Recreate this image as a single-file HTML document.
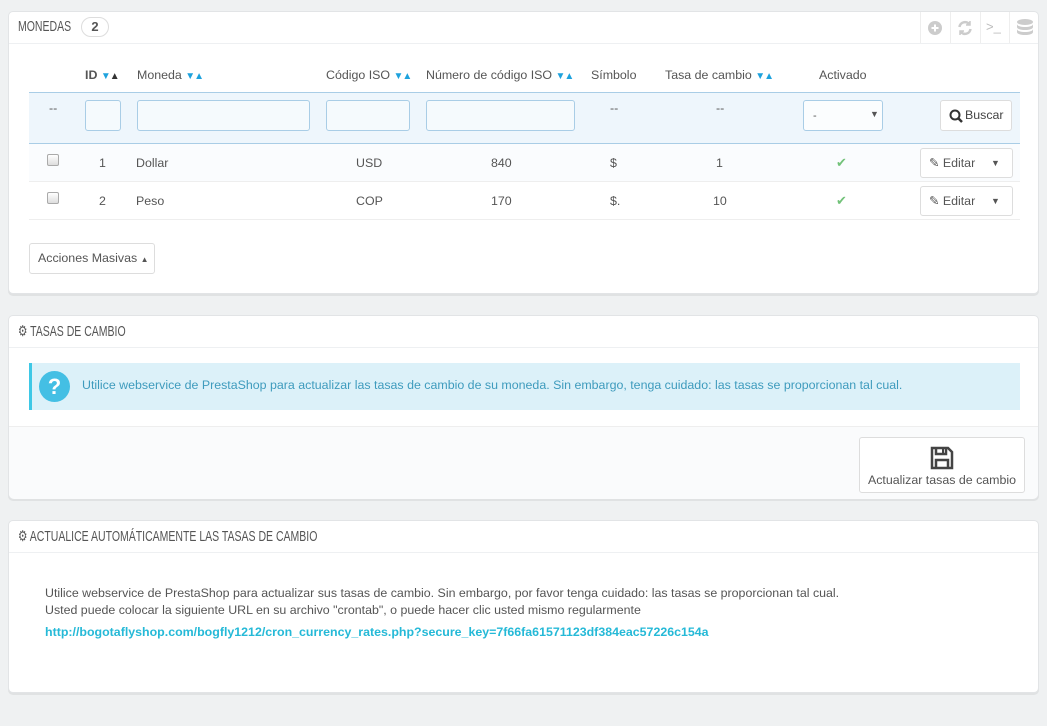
<!DOCTYPE html>
<html><head><meta charset="utf-8"><style>
*{box-sizing:border-box;margin:0;padding:0}
body{width:1047px;height:726px;background:#eff1f2;font-family:"Liberation Sans",sans-serif;font-size:12.4px;color:#555;position:relative;overflow:hidden}
.a{position:absolute}
.panel{position:absolute;left:8px;width:1031px;background:#fff;border:1px solid #e2e4e6;border-radius:5px;box-shadow:0 2px 0 rgba(0,0,0,.06)}
.ttl{position:absolute;left:9px;font-size:15px;color:#555;transform:scaleX(.7);transform-origin:0 0;white-space:nowrap}
.hl{position:absolute;left:0;right:0;height:1px;background:#eef0f2}
.inp{position:absolute;height:31px;border:1px solid #a9cde6;border-radius:3px;background:#f5fafd}
.th{position:absolute;top:56px;font-size:12.4px;color:#555;white-space:nowrap}
.ar{color:#1ea2dd;font-size:10px;letter-spacing:-1px}
.td{position:absolute;font-size:12.4px;color:#555}
.btn{position:absolute;border:1px solid #ddd;border-radius:3px;background:#fff;font-size:12.4px;color:#555}
.chk{position:absolute;left:38px;width:12px;height:12px;border:1px solid #aaa;border-radius:2px;background:linear-gradient(#fff,#ddd)}
.ok{position:absolute;left:827px;color:#72c279;font-size:13px}
</style></head><body>

<div class="panel" style="top:11px;height:283px">
 <div class="ttl" style="top:6px">MONEDAS</div>
 <div class="a" style="left:72px;top:5px;width:28px;height:20px;border:1px solid #ddd;border-radius:10px;text-align:center;font-weight:bold;font-size:13px;line-height:18px;color:#555">2</div>
 <div class="hl" style="top:31px"></div>
 <div class="a" style="left:911px;top:0;width:1px;height:31px;background:#eee"></div>
 <div class="a" style="left:941px;top:0;width:1px;height:31px;background:#eee"></div>
 <div class="a" style="left:971px;top:0;width:1px;height:31px;background:#eee"></div>
 <div class="a" style="left:1000px;top:0;width:1px;height:31px;background:#eee"></div>
 <svg class="a" style="left:919px;top:9px" width="14" height="14"><circle cx="7" cy="7" r="7" fill="#ccc"/><path d="M7 3.5v7M3.5 7h7" stroke="#fff" stroke-width="2"/></svg>
 <svg class="a" style="left:948px;top:8px" width="16" height="16" fill="none" stroke="#ccc" stroke-width="2.5"><path d="M2.5 7a5.5 5.5 0 0 1 10-2.5M13.5 9a5.5 5.5 0 0 1-10 2.5"/><path d="M13 1v4h-4M3 15v-4h4" fill="#ccc" stroke-width="1.5"/></svg>
 <div class="a" style="left:977px;top:7px;color:#bbb;font-size:13px">&gt;_</div>
 <svg class="a" style="left:1008px;top:7px" width="16" height="18" fill="#ccc"><ellipse cx="8" cy="3" rx="8" ry="3"/><path d="M0 5c0 4 16 4 16 0v3c0 4-16 4-16 0zM0 10c0 4 16 4 16 0v3c0 4-16 4-16 0z"/></svg>

 <div class="th" style="left:76px;font-weight:bold">ID <span class="ar">▼</span><span style="color:#333;font-size:10px">▲</span></div>
 <div class="th" style="left:128px">Moneda <span class="ar">▼▲</span></div>
 <div class="th" style="left:317px">Código ISO <span class="ar">▼▲</span></div>
 <div class="th" style="left:417px">Número de código ISO <span class="ar">▼▲</span></div>
 <div class="th" style="left:582px">Símbolo</div>
 <div class="th" style="left:656px">Tasa de cambio <span class="ar">▼▲</span></div>
 <div class="th" style="left:810px">Activado</div>

 <div class="a" style="left:20px;top:80px;width:991px;height:52px;background:#eef6fc;border-top:1px solid #a9cde6;border-bottom:1px solid #a9cde6"></div>
 <div class="td" style="left:40px;top:89px">--</div>
 <div class="inp" style="left:76px;top:88px;width:36px"></div>
 <div class="inp" style="left:128px;top:88px;width:173px"></div>
 <div class="inp" style="left:317px;top:88px;width:84px"></div>
 <div class="inp" style="left:417px;top:88px;width:149px"></div>
 <div class="td" style="left:601px;top:89px">--</div>
 <div class="td" style="left:707px;top:89px">--</div>
 <div class="inp" style="left:794px;top:88px;width:80px;background:#fbfdfe"><span class="a" style="left:9px;top:9px;font-size:11px">-</span><span class="a" style="left:66px;top:8px;font-size:9px;color:#555">▼</span></div>
 <div class="btn" style="left:931px;top:88px;width:72px;height:31px;line-height:29px;padding-left:24px;color:#444">Buscar<svg class="a" style="left:8px;top:8px" width="14" height="14" fill="none" stroke="#333" stroke-width="2"><circle cx="6" cy="6" r="4.5"/><path d="M9 9l4 4" stroke-width="2.5"/></svg></div>

 <div class="a" style="left:20px;top:132px;width:991px;height:38px;background:#fafcfe;border-bottom:1px solid #eee"></div>
 <div class="a" style="left:20px;top:170px;width:991px;height:38px;border-bottom:1px solid #eee"></div>
 <div class="chk" style="top:142px"></div>
 <div class="td" style="left:90px;top:144px">1</div>
 <div class="td" style="left:127px;top:144px">Dollar</div>
 <div class="td" style="left:347px;top:144px">USD</div>
 <div class="td" style="left:482px;top:144px">840</div>
 <div class="td" style="left:601px;top:144px">$</div>
 <div class="td" style="left:707px;top:144px">1</div>
 <div class="ok" style="top:143px">✔</div>
 <div class="btn" style="left:911px;top:136px;width:93px;height:30px;line-height:28px;padding-left:8px">✎ Editar<span class="a" style="left:70px;top:0;font-size:9px;color:#555">▼</span></div>

 <div class="chk" style="top:180px"></div>
 <div class="td" style="left:90px;top:182px">2</div>
 <div class="td" style="left:127px;top:182px">Peso</div>
 <div class="td" style="left:347px;top:182px">COP</div>
 <div class="td" style="left:482px;top:182px">170</div>
 <div class="td" style="left:601px;top:182px">$.</div>
 <div class="td" style="left:704px;top:182px">10</div>
 <div class="ok" style="top:181px">✔</div>
 <div class="btn" style="left:911px;top:174px;width:93px;height:30px;line-height:28px;padding-left:8px">✎ Editar<span class="a" style="left:70px;top:0;font-size:9px;color:#555">▼</span></div>

 <div class="btn" style="left:20px;top:231px;width:126px;height:31px;line-height:29px;padding-left:8px">Acciones Masivas <span style="font-size:8px">▲</span></div>
</div>

<div class="panel" style="top:315px;height:184px">
 <div class="ttl" style="top:6px">⚙ TASAS DE CAMBIO</div>
 <div class="hl" style="top:31px"></div>
 <div class="a" style="left:20px;top:47px;width:991px;height:47px;background:#dcf1f9;border-left:3px solid #3ec8e6"></div>
 <div class="a" style="left:30px;top:55px;width:31px;height:31px;border-radius:50%;background:#44bfe4;color:#fff;font-weight:bold;font-size:22px;text-align:center;line-height:31px">?</div>
 <div class="a" style="left:73px;top:62px;font-size:12.4px;color:#3e9bbd;white-space:nowrap">Utilice webservice de PrestaShop para actualizar las tasas de cambio de su moneda. Sin embargo, tenga cuidado: las tasas se proporcionan tal cual.</div>
 <div class="a" style="left:0;top:110px;width:1029px;height:73px;background:#fafbfc;border-top:1px solid #eee;border-radius:0 0 5px 5px"></div>
 <div class="btn" style="left:850px;top:121px;width:166px;height:56px;text-align:center">
  <svg class="a" style="left:70px;top:8px" width="24" height="24" fill="none" stroke="#444" stroke-width="2.5"><path d="M2 2h16l4 4v16H2z"/><path d="M6 2v6h10V2M6 22v-8h12v8"/><rect x="12" y="3" width="2" height="4" fill="#444" stroke="none"/></svg>
  <div class="a" style="left:0;right:0;top:35px;color:#555;white-space:nowrap">Actualizar tasas de cambio</div>
 </div>
</div>

<div class="panel" style="top:520px;height:173px">
 <div class="ttl" style="top:6px">⚙ ACTUALICE AUTOMÁTICAMENTE LAS TASAS DE CAMBIO</div>
 <div class="hl" style="top:31px"></div>
 <div class="a" style="left:36px;top:64px;line-height:17px;font-size:12.4px;color:#555;white-space:nowrap">Utilice webservice de PrestaShop para actualizar sus tasas de cambio. Sin embargo, por favor tenga cuidado: las tasas se proporcionan tal cual.<br>Usted puede colocar la siguiente URL en su archivo "crontab", o puede hacer clic usted mismo regularmente</div>
 <div class="a" style="left:36px;top:104px;font-weight:bold;font-size:12.4px;color:#25b9d7;white-space:nowrap">http://bogotaflyshop.com/bogfly1212/cron_currency_rates.php?secure_key=7f66fa61571123df384eac57226c154a</div>
</div>
</body></html>
